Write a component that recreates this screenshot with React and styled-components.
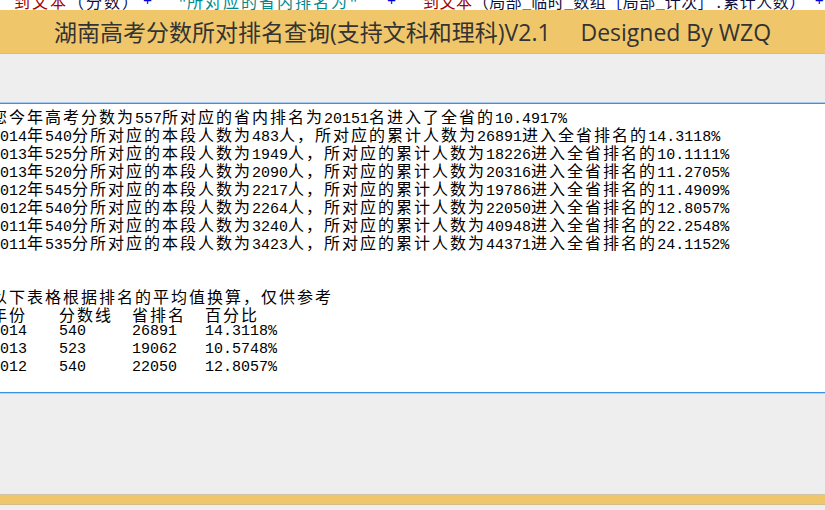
import React from 'react';
import styled, { createGlobalStyle } from 'styled-components';

//global page setup
const Global = createGlobalStyle`
  html, body {
    margin: 0;
    padding: 0;
    background-color: #eeeeee;
  }
  #root {
    width: 825px;
    height: 510px;
    overflow: hidden;
  }
`;

const Page = styled.div`
  display: flex;
  flex-direction: column;
  width: 825px;
  height: 510px;
  background-color: #eeeeee;
`;

// code editor line peeking in at the top, only the lower half is visible
const CodeStrip = styled.div`
  height: 10px;
  background-color: #ffffff;
  overflow: hidden;
`;
const CodeLine = styled.div`
  display: flex;
  margin-top: -6px;
  padding-left: 14px;
  height: 16px;
  line-height: 15px;
  font-size: 15px;
  font-family: 'Liberation Mono', 'Noto Sans CJK SC', monospace;
  white-space: pre;
`;
const Token = styled.span`
  color: ${p => p.$color || '#101040'};
  margin-left: ${p => p.$gap || 0}px;
`;

const TitleBar = styled.header`
  box-sizing: border-box;
  height: 44px;
  background-color: #f0c66b;
  border-bottom: 1px solid #d9bd7e;
  display: flex;
  align-items: center;
  justify-content: center;
  padding-bottom: 2px;
`;
const Title = styled.h1`
  margin: 0;
  font-family: 'Open Sans', 'Noto Sans CJK SC', sans-serif;
  font-weight: 400;
  font-size: 23px;
  color: #333333;
  white-space: pre;
`;

const Workspace = styled.main`
  flex: 1;
  display: flex;
  flex-direction: column;
  padding-top: 49px;
`;

const Result = styled.section`
  box-sizing: border-box;
  height: 290px;
  background-color: #ffffff;
  border-top: 1px solid #3d92e6;
  border-bottom: 1px solid #3d92e6;
  box-shadow: 0 -1px 0 #a9cbef, 0 1px 0 #b8d3ef;
  overflow: hidden;
  padding-top: 3px;
`;
const Text = styled.div`
  margin-left: -9px;
  font-family: 'Liberation Mono', 'Noto Sans CJK SC', monospace;
  font-size: 15px;
  color: #000000;
`;
const Line = styled.div`
  height: 18px;
  line-height: 18px;
  white-space: pre;
`;
const Row = styled.div`
  display: grid;
  grid-template-columns: 68px 73px 73px auto;
  height: 18px;
  line-height: 18px;
  white-space: pre;
`;
const Han = styled.span`
  font-family: 'Noto Sans CJK SC', sans-serif;
  font-size: 16px;
  letter-spacing: ${p => (p.$sp === undefined ? 2 : p.$sp)}px;
`;

const BottomBar = styled.footer`
  box-sizing: border-box;
  margin-top: 101px;
  height: 11px;
  background-color: #f0c66b;
  border-top: 1px solid #d2c4a4;
  border-bottom: 1px solid #d4bd8c;
`;

// wrap the chinese runs so they take the double width of the ascii ones
function Mixed({ text, sp }) {
  const parts = text.split(/([\u3000-\u303f\u4e00-\u9fff\uff00-\uffef]+)/);
  return parts.map((part, i) =>
    i % 2 === 1 ? (
      <Han key={i} $sp={sp}>
        {part}
      </Han>
    ) : (
      part
    )
  );
}

const lines = [
  '您今年高考分数为557所对应的省内排名为20151名进入了全省的10.4917%',
  '2014年540分所对应的本段人数为483人，所对应的累计人数为26891进入全省排名的14.3118%',
  '2013年525分所对应的本段人数为1949人，所对应的累计人数为18226进入全省排名的10.1111%',
  '2013年520分所对应的本段人数为2090人，所对应的累计人数为20316进入全省排名的11.2705%',
  '2012年545分所对应的本段人数为2217人，所对应的累计人数为19786进入全省排名的11.4909%',
  '2012年540分所对应的本段人数为2264人，所对应的累计人数为22050进入全省排名的12.8057%',
  '2011年540分所对应的本段人数为3240人，所对应的累计人数为40948进入全省排名的22.2548%',
  '2011年535分所对应的本段人数为3423人，所对应的累计人数为44371进入全省排名的24.1152%',
  '',
  '',
  '以下表格根据排名的平均值换算，仅供参考'
];

const table = [
  ['年份', '分数线', '省排名', '百分比'],
  ['2014', '540', '26891', '14.3118%'],
  ['2013', '523', '19062', '10.5748%'],
  ['2012', '540', '22050', '12.8057%']
];

const RED = '#a00000';
const BLUE = '#0000d0';
const TEAL = '#008a8a';
const DARK = '#101040';

export default function App() {
  return (
    <Page>
      <Global />
      <CodeStrip>
        <CodeLine>
          <Token $color={RED}>
            <Mixed text="到文本" />
          </Token>
          <Token $color={DARK}>
            <Mixed text="（分数）" />
          </Token>
          <Token $color={BLUE} $gap={3}>
            +
          </Token>
          <Token $color={TEAL} $gap={26}>
            <Mixed text={'"所对应的省内排名为"'} />
          </Token>
          <Token $color={BLUE} $gap={29}>
            +
          </Token>
          <Token $color={RED} $gap={27}>
            <Mixed text="到文本" sp={0.5} />
          </Token>
          <Token $color={DARK}>
            <Mixed text="（局部_临时_数组" sp={0.5} />
          </Token>
          <Token $color={BLUE}>
            <Mixed text="［" sp={0.5} />
          </Token>
          <Token $color={DARK}>
            <Mixed text="局部_计次" sp={0.5} />
          </Token>
          <Token $color={BLUE}>
            <Mixed text="］" sp={0.5} />
          </Token>
          <Token $color={DARK}>
            <Mixed text=".累计人数" sp={0.5} />
          </Token>
          <Token $color={BLUE}>
            <Mixed text="）" sp={0.5} />
          </Token>
          <Token $color={BLUE} $gap={9}>
            +
          </Token>
        </CodeLine>
      </CodeStrip>
      <TitleBar>
        <Title>{'湖南高考分数所对排名查询(支持文科和理科)V2.1     Designed By WZQ'}</Title>
      </TitleBar>
      <Workspace>
        <Result>
          <Text>
            {lines.map((line, n) => (
              <Line key={n}>
                <Mixed text={line} />
              </Line>
            ))}
            {table.map((row, n) => (
              <Row key={'r' + n}>
                {row.map((cell, c) => (
                  <span key={c}>
                    <Mixed text={cell} />
                  </span>
                ))}
              </Row>
            ))}
          </Text>
        </Result>
        <BottomBar />
      </Workspace>
    </Page>
  );
}
